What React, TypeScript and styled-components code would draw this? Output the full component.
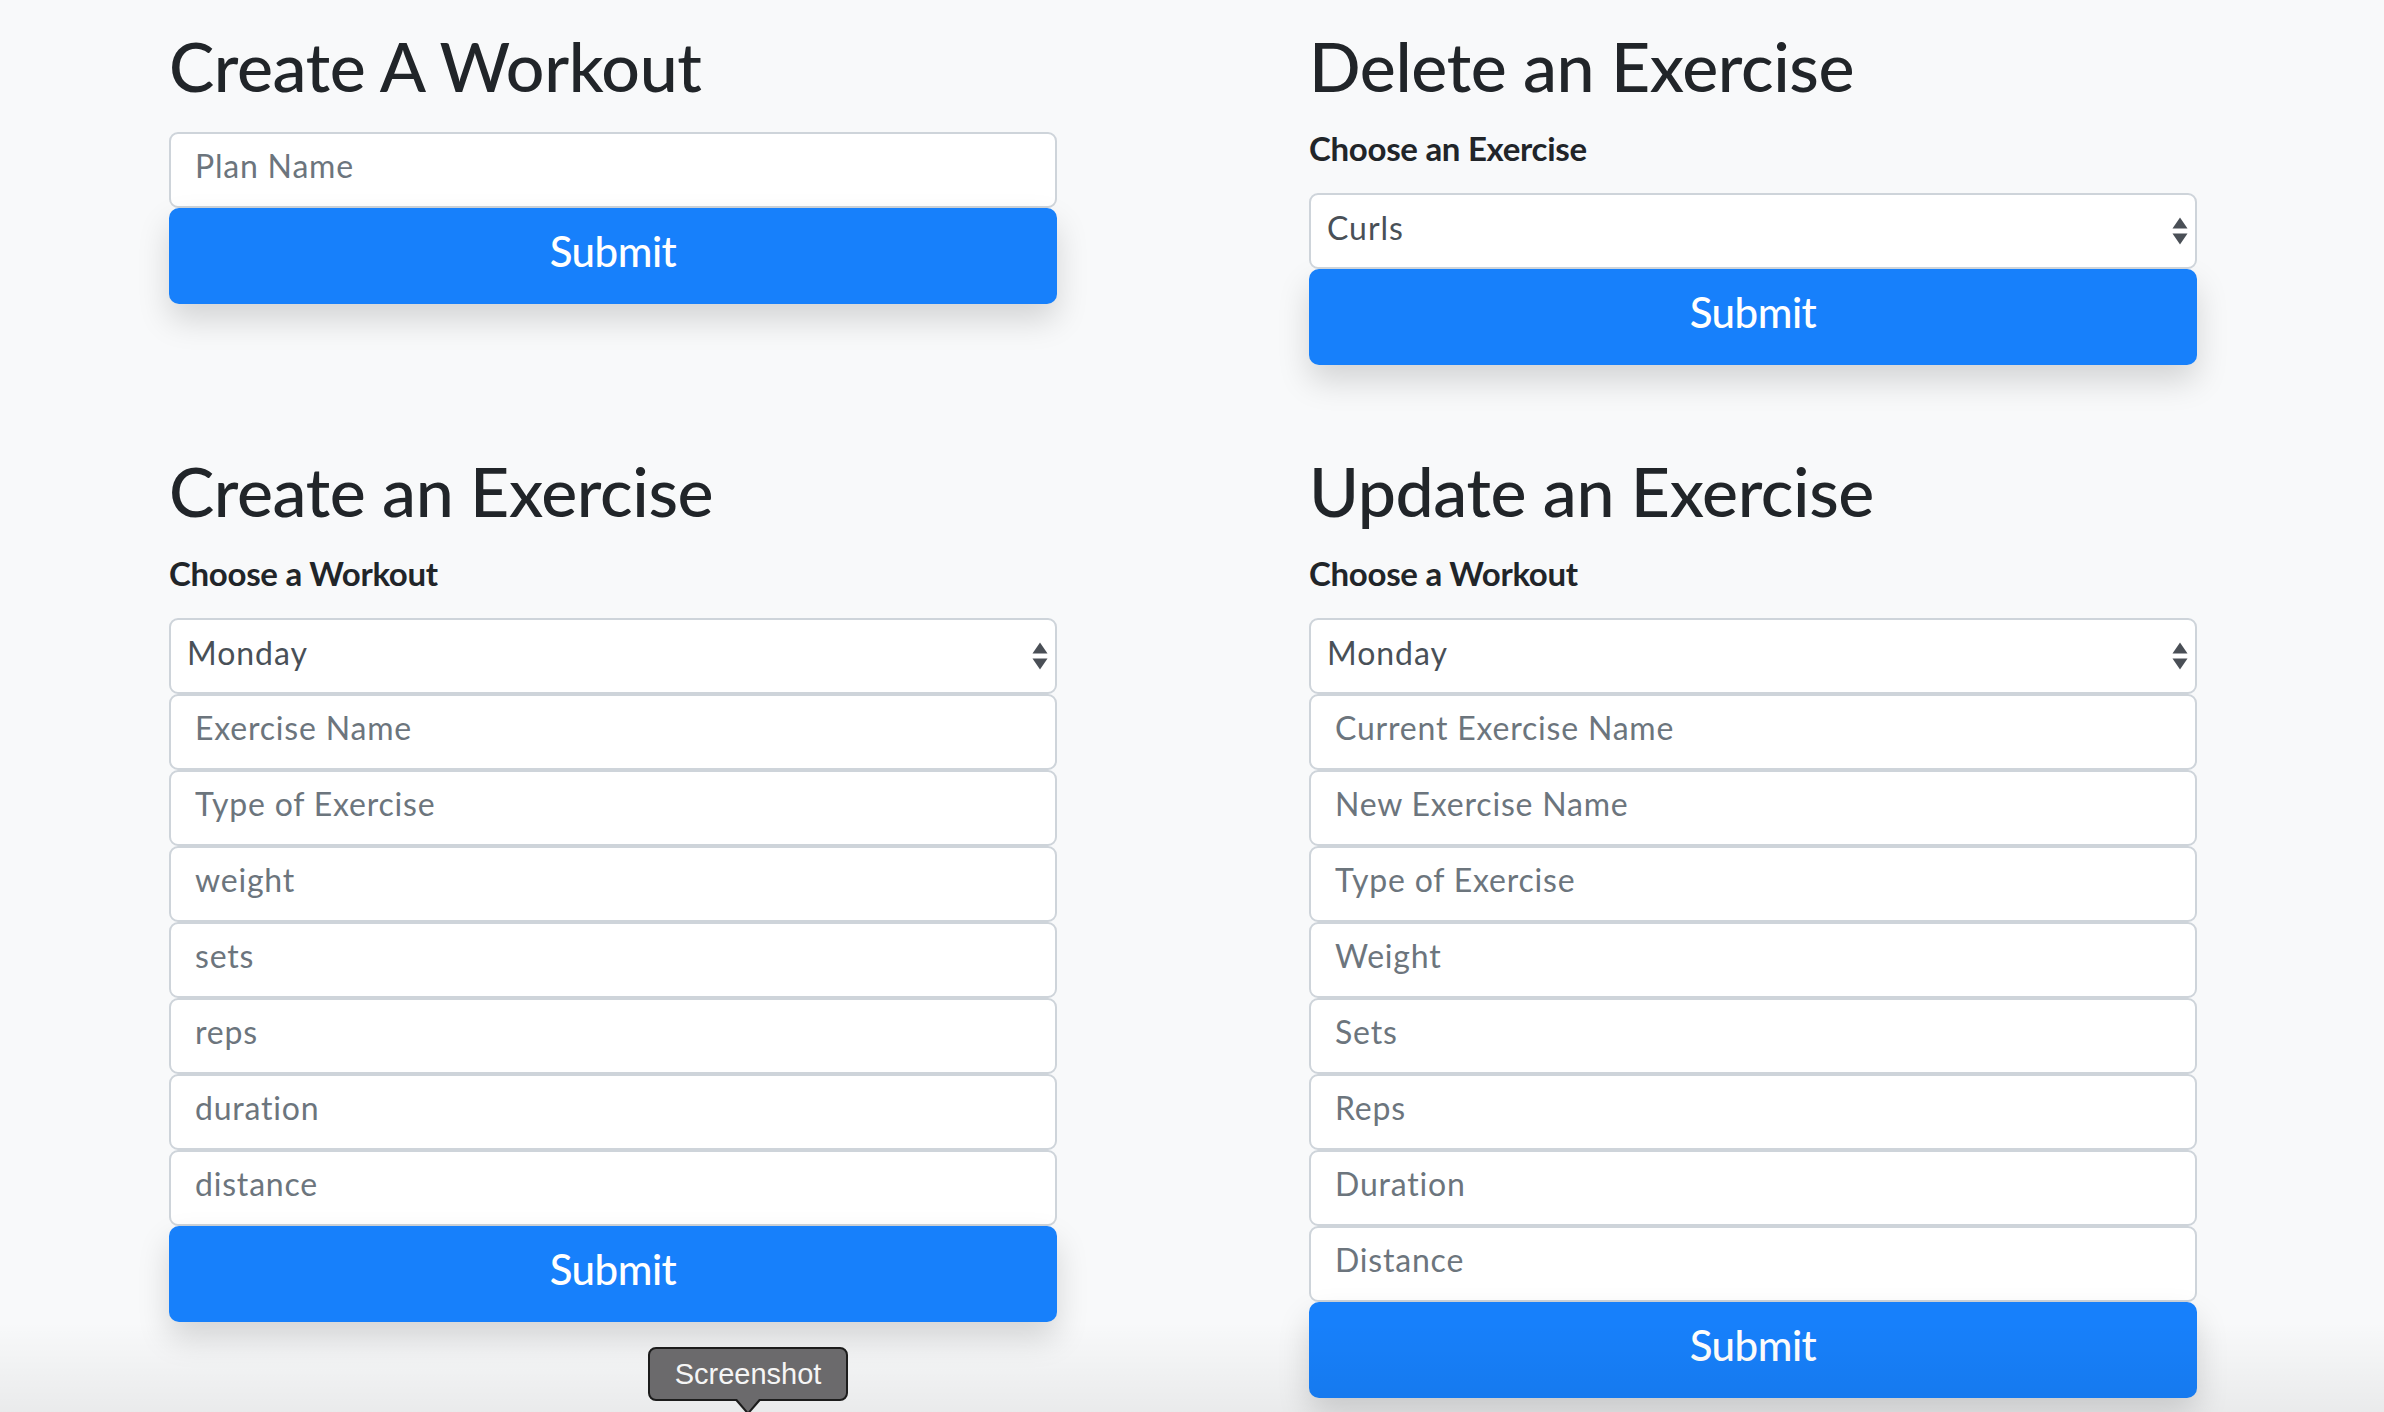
import React from "react";
import styled, { createGlobalStyle } from "styled-components";

const GlobalStyle = createGlobalStyle`
  html, body {
    margin: 0;
    padding: 0;
    background: #f8f9fa;
    height: 1412px;
    overflow: hidden;
  }
  * { box-sizing: border-box; }
`;

const Page = styled.div`
  position: relative;
  min-height: 1412px;
  background: #f8f9fa;
  font-family: Lato, "Open Sans", sans-serif;
  color: #212529;
  padding: 32px 0 0 169px;
`;

const Grid = styled.div`
  display: grid;
  grid-template-columns: 888px 888px;
  column-gap: 252px;
  row-gap: 92px;
  align-items: start;
`;

const Section = styled.section`
  display: flex;
  flex-direction: column;
`;

const Heading = styled.h2`
  margin: 0 0 32px 0;
  font-size: 68px;
  line-height: 68px;
  font-weight: 500;
  letter-spacing: -0.4px;
  color: #212529;
`;

const Label = styled.label`
  display: block;
  margin: 0 0 28px 0;
  font-size: 33px;
  line-height: 33px;
  font-weight: 700;
  letter-spacing: -0.3px;
  color: #212529;
`;

const Form = styled.form`
  display: flex;
  flex-direction: column;
`;

const Input = styled.input`
  display: block;
  width: 100%;
  height: 76px;
  padding: 0 24px 9px 24px;
  border: 2px solid #ced4da;
  border-radius: 9px;
  background: #fff;
  font-family: Lato, "Open Sans", sans-serif;
  font-size: 32px;
  letter-spacing: 0.025em;
  color: #495057;
  outline: none;
  &::placeholder {
    color: #6c757d;
    opacity: 1;
  }
`;

const SelectWrap = styled.div`
  position: relative;
  width: 100%;
`;

const Select = styled.select`
  display: block;
  width: 100%;
  height: 76px;
  padding: 0 50px 7px 16px;
  border: 2px solid #ced4da;
  border-radius: 9px;
  background: #fff;
  font-family: Lato, "Open Sans", sans-serif;
  font-size: 32px;
  letter-spacing: 0.03em;
  color: #495057;
  appearance: none;
  -webkit-appearance: none;
  outline: none;
`;

const Arrows = styled.svg`
  position: absolute;
  right: 9px;
  top: 50%;
  transform: translateY(-50%);
  pointer-events: none;
`;

const Button = styled.button`
  display: block;
  width: 100%;
  height: 96px;
  padding: 0 0 10px 0;
  border: none;
  border-radius: 10px;
  background: #1780fb;
  color: #fff;
  font-family: Lato, "Open Sans", sans-serif;
  font-size: 42px;
  font-weight: 500;
  letter-spacing: -0.5px;
  box-shadow: 0 16px 32px rgba(0, 0, 0, 0.15);
  cursor: pointer;
`;

const BottomShade = styled.div`
  position: absolute;
  left: 0;
  right: 0;
  bottom: 0;
  height: 90px;
  background: linear-gradient(to bottom, rgba(0, 0, 0, 0), rgba(0, 0, 0, 0.06));
  pointer-events: none;
`;

const Tooltip = styled.div`
  position: absolute;
  left: 648px;
  top: 1347px;
  width: 200px;
  height: 54px;
  display: flex;
  align-items: center;
  justify-content: center;
  background: #6b6a6c;
  border: 2px solid #1c1c1c;
  border-radius: 8px;
  color: #f5f5f5;
  font-family: "Liberation Sans", Arial, sans-serif;
  font-size: 29px;
  &::before {
    content: "";
    position: absolute;
    left: 50%;
    bottom: -16px;
    transform: translateX(-50%);
    border-left: 14px solid transparent;
    border-right: 14px solid transparent;
    border-top: 16px solid #1c1c1c;
  }
  &::after {
    content: "";
    position: absolute;
    left: 50%;
    bottom: -13px;
    transform: translateX(-50%);
    border-left: 11px solid transparent;
    border-right: 11px solid transparent;
    border-top: 13px solid #6b6a6c;
  }
`;

const SelectField: React.FC<{ options: string[] }> = ({ options }) => (
  <SelectWrap>
    <Select defaultValue={options[0]}>
      {options.map((o) => (
        <option key={o}>{o}</option>
      ))}
    </Select>
    <Arrows width="16" height="28" viewBox="0 0 16 28">
      <polygon points="8,0.5 15.5,11.5 0.5,11.5" fill="#4a4f56" />
      <polygon points="0.5,16.5 15.5,16.5 8,27.5" fill="#4a4f56" />
    </Arrows>
  </SelectWrap>
);

const createFields = ["Exercise Name", "Type of Exercise", "weight", "sets", "reps", "duration", "distance"];
const updateFields = [
  "Current Exercise Name",
  "New Exercise Name",
  "Type of Exercise",
  "Weight",
  "Sets",
  "Reps",
  "Duration",
  "Distance",
];

export default function App() {
  return (
    <Page>
      <GlobalStyle />
      <Grid>
        <Section>
          <Heading>Create A Workout</Heading>
          <Form onSubmit={(e) => e.preventDefault()}>
            <Input placeholder="Plan Name" />
            <Button type="submit">Submit</Button>
          </Form>
        </Section>
        <Section>
          <Heading>Delete an Exercise</Heading>
          <Label>Choose an Exercise</Label>
          <Form onSubmit={(e) => e.preventDefault()}>
            <SelectField options={["Curls"]} />
            <Button type="submit">Submit</Button>
          </Form>
        </Section>
        <Section>
          <Heading>Create an Exercise</Heading>
          <Label>Choose a Workout</Label>
          <Form onSubmit={(e) => e.preventDefault()}>
            <SelectField options={["Monday"]} />
            {createFields.map((f) => (
              <Input key={f} placeholder={f} />
            ))}
            <Button type="submit">Submit</Button>
          </Form>
        </Section>
        <Section>
          <Heading>Update an Exercise</Heading>
          <Label>Choose a Workout</Label>
          <Form onSubmit={(e) => e.preventDefault()}>
            <SelectField options={["Monday"]} />
            {updateFields.map((f) => (
              <Input key={f} placeholder={f} />
            ))}
            <Button type="submit">Submit</Button>
          </Form>
        </Section>
      </Grid>
      <BottomShade />
      <Tooltip>Screenshot</Tooltip>
    </Page>
  );
}
